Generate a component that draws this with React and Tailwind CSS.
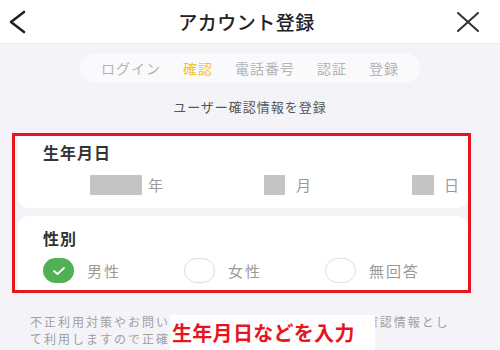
import React from 'react';

const steps = ['ログイン', '確認', '電話番号', '認証', '登録'];

function Radio({ checked, label }) {
  return (
    <div className="flex items-center w-[141px] shrink-0">
      {checked ? (
        <div className="w-[31px] h-[25px] rounded-full bg-[#4fb153] flex items-center justify-center">
          <svg width="14" height="10" viewBox="0 0 14 10" fill="none">
            <polyline points="2,5 5.5,8 12,2" stroke="white" strokeWidth="1.8" strokeLinecap="round" strokeLinejoin="round" />
          </svg>
        </div>
      ) : (
        <div className="w-[31px] h-[25px] rounded-full border border-[#dedede] bg-white" />
      )}
      <span className="ml-[13px] text-[15px] leading-[20px] tracking-[2px] text-[#9a9a9a]">{label}</span>
    </div>
  );
}

export default function App() {
  return (
    <div
      className="relative w-[500px] h-[350px] overflow-hidden bg-[#f4f4f8]"
      style={{ fontFamily: '"Noto Sans CJK JP", "Noto Sans", sans-serif' }}
    >
      {/* Header */}
      <div className="h-[44px] bg-white border-b border-[#ececf0] flex items-center justify-between pl-[8px] pr-[21px]">
        <svg width="20" height="26" viewBox="0 0 20 26" fill="none">
          <polyline points="16,3 3,13 16,23" stroke="#222" strokeWidth="2.6" strokeLinecap="round" strokeLinejoin="round" />
        </svg>
        <span className="ml-[8px] text-[19px] leading-[24px] font-medium text-[#222] tracking-[0.5px]">アカウント登録</span>
        <svg width="22" height="20" viewBox="0 0 22 20" fill="none">
          <path d="M1 1 L21 19 M21 1 L1 19" stroke="#333" strokeWidth="2" strokeLinecap="round" />
        </svg>
      </div>

      {/* Steps */}
      <div className="mt-[9px] mx-auto w-[340px] h-[30px] rounded-full bg-[#fafafc] flex items-center justify-center gap-[22px]">
        {steps.map((s) => (
          <span
            key={s}
            className={`text-[14px] leading-[18px] tracking-[1px] ${s === '確認' ? 'text-[#f2c230]' : 'text-[#b4b4b4]'}`}
          >
            {s}
          </span>
        ))}
      </div>

      <div className="mt-[16px] text-center text-[13px] leading-[16px] tracking-[1px] text-[#555]">
        ユーザー確認情報を登録
      </div>

      {/* Form cards (red annotation frame) */}
      <div className="mt-[18px] ml-[12px] w-[459px] border-[3px] border-[#e8141e]">
        <div className="ml-[3px] bg-white rounded-b-[10px] pt-[6px] pb-[13px] px-[25px]">
          <div className="text-[16px] leading-[20px] font-bold tracking-[1px] text-[#333]">生年月日</div>
          <div className="mt-[13px] ml-[47px] flex items-center h-[20px]">
            <div className="w-[52px] h-[20px] shrink-0 bg-[#c4c4c4]" />
            <span className="ml-[6px] text-[15px] text-[#999]">年</span>
            <div className="ml-[101px] w-[21px] h-[20px] shrink-0 bg-[#c4c4c4]" />
            <span className="ml-[11px] text-[15px] text-[#999]">月</span>
            <div className="ml-[101px] w-[22px] h-[20px] shrink-0 bg-[#c4c4c4]" />
            <span className="ml-[10px] text-[15px] text-[#999]">日</span>
          </div>
        </div>
        <div className="h-[8px] bg-[#f4f4f8]" />
        <div className="ml-[3px] bg-white rounded-t-[10px] pt-[12px] pb-[7px] px-[25px]">
          <div className="text-[16px] leading-[20px] font-bold tracking-[1px] text-[#333]">性別</div>
          <div className="mt-[10px] flex items-center">
            <Radio checked label="男性" />
            <Radio label="女性" />
            <Radio label="無回答" />
          </div>
        </div>
      </div>

      {/* Note */}
      <div className="mt-[20px] pl-[30px] text-[12px] leading-[17px] tracking-[2px] text-[#a0a0a0] whitespace-nowrap">
        <div>不正利用対策やお問い合わせの際に、お客様ご本人の確認情報とし</div>
        <div>て利用しますので正確に入力してください。</div>
      </div>

      {/* Annotation */}
      <div className="absolute left-[170px] top-[315px] w-[205px] h-[36px] bg-white pl-[2px] flex items-center">
        <span className="text-[20px] leading-[24px] font-bold text-[#e8141e] tracking-[0.3px]">生年月日などを入力</span>
      </div>
    </div>
  );
}
